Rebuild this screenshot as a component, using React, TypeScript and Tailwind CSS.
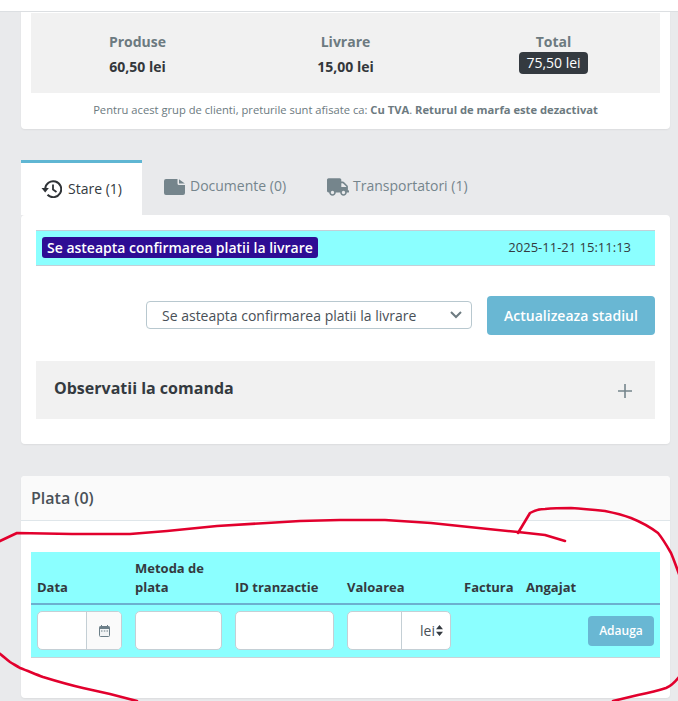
import { FaTruck } from "react-icons/fa";

function Stat({ label, value, badge }: { label: string; value: string; badge?: boolean }) {
  return (
    <div className="flex flex-col items-center w-[208px]">
      <div className="text-[14px] leading-[20px] font-bold text-[#6c7a80] mt-[19px]">{label}</div>
      {badge ? (
        <div className="h-[22px] px-[7.5px] rounded-[4px] bg-[#343a40] text-white text-[14px] leading-[22px]">{value}</div>
      ) : (
        <div className="text-[14px] leading-[20px] font-bold text-[#33373b] mt-[5px]">{value}</div>
      )}
    </div>
  );
}

function Th({ children }: { children: React.ReactNode }) {
  return <div className="text-[13px] leading-[19px] font-bold text-[#343a40] self-end">{children}</div>;
}

export default function App() {
  return (
    <div className="relative h-[701px] w-[678px] overflow-hidden bg-[#e9eaec] font-['Open_Sans',sans-serif] text-[#343a40]">
      <div className="h-[12px] bg-white border-b border-[#dcdfe2]" />
      <div className="px-[21px] pr-[8px]">
        <section className="h-[117px] bg-white rounded-b-[4px] shadow-[0_1px_2px_rgba(0,0,0,0.06)] px-[10px] pt-[1px]">
          <div className="h-[80px] bg-[#f1f1f1] flex justify-center">
            <Stat label="Produse" value="60,50 lei" />
            <Stat label="Livrare" value="15,00 lei" />
            <Stat label="Total" value="75,50 lei" badge />
          </div>
          <p className="mt-[9px] text-center text-[11.2px] leading-[16px] text-[#6c7a80]">
            Pentru acest grup de clienti, preturile sunt afisate ca: <b className="font-bold">Cu TVA</b>. <b className="font-bold">Returul de marfa este dezactivat</b>
          </p>
        </section>

        <nav className="mt-[31px] h-[55px] flex items-start">
          <div className="w-[121px] h-[55px] bg-white border-t-[3px] border-[#5fb6d3] flex items-center justify-center gap-[6px] text-[14px] text-[#343a40] pb-[1px]">
            <svg width="21" height="18" viewBox="0 0 21 18" fill="none" stroke="#2f3337" strokeWidth="2" className="mt-[1px]">
              <path d="M4.2 9A8 8 0 1 1 6.5 14.8" />
              <path d="M0.5 8h7.4L4.2 12.6z" fill="#2f3337" stroke="none" />
              <path d="M12 4.5V9.5L15.5 12" strokeWidth="1.8" />
            </svg>
            <span>Stare (1)</span>
          </div>
          <div className="ml-[22px] mt-[15px] flex items-center gap-[5px] text-[14px] leading-[22px] text-[#75858c]">
            <svg width="21" height="16" viewBox="0 0 21 16" fill="#75858c" className="mt-[2px]">
              <path d="M2 0H13.5V4.5a1.5 1.5 0 0 0 1.5 1.5H21V14a2 2 0 0 1-2 2H2a2 2 0 0 1-2-2V2a2 2 0 0 1 2-2z" />
              <path d="M15 0.2L20.8 4.6H15z" />
            </svg>
            <span>Documente (0)</span>
          </div>
          <div className="ml-[41px] mt-[15px] flex items-center gap-[4px] text-[14px] leading-[22px] text-[#75858c]">
            <FaTruck className="w-[22px] h-[18px] mt-[1px]" />
            <span>Transportatori (1)</span>
          </div>
        </nav>

        <section className="h-[229px] bg-white rounded-[4px] shadow-[0_1px_2px_rgba(0,0,0,0.06)] px-[15px] pt-[15px]">
          <div className="h-[36px] bg-[#8bffff] border-y border-[#c3d0d8] flex items-center justify-between pl-[6px] pr-[24px]">
            <span className="h-[21px] px-[5px] rounded-[3px] bg-[#2e0d94] text-white text-[14px] leading-[21px] font-semibold -mt-[1px]">Se asteapta confirmarea platii la livrare</span>
            <span className="text-[13px] text-[#343a40]">2025-11-21 15:11:13</span>
          </div>
          <div className="mt-[30px] flex justify-end items-start gap-[15px]">
            <div className="mt-[5px] w-[326px] h-[28px] border border-[#b8c8cf] rounded-[4px] bg-white flex items-center justify-between pl-[15px] pr-[9px] text-[14px] text-[#495057]">
              <span>Se asteapta confirmarea platii la livrare</span>
              <svg width="12" height="8" viewBox="0 0 12 8" fill="none" stroke="#6e7b81" strokeWidth="2"><path d="M1 1l5 5 5-5" /></svg>
            </div>
            <button className="w-[168px] h-[39px] rounded-[4px] bg-[#69b7d3] text-white text-[14px] font-semibold">Actualizeaza stadiul</button>
          </div>
          <div className="mt-[26px] h-[58px] bg-[#f1f1f1] flex items-center justify-between pl-[18px] pr-[22px]">
            <h3 className="text-[16px] leading-[24px] font-bold text-[#343a40] -mt-[5px]">Observatii la comanda</h3>
            <svg width="16" height="16" viewBox="0 0 16 16" stroke="#75858c" strokeWidth="1.6" className="mt-[2px]"><path d="M8 1v14M1 8h14" /></svg>
          </div>
        </section>

        <section className="mt-[32px] h-[222px] bg-white rounded-[4px] shadow-[0_1px_2px_rgba(0,0,0,0.06)]">
          <div className="h-[45px] bg-[#fafafa] border-b border-[#dfe6ea] rounded-t-[4px] pl-[10px] text-[16px] leading-[44px] font-semibold text-[#495057]">Plata (0)</div>
          <div className="mx-[10px] mt-[31px] h-[106px] bg-[#8bffff] border-b border-[#c9d3d8]">
            <div className="h-[53px] grid grid-cols-[98px_100px_112px_117px_62px_1fr] pl-[6px] border-b-[2px] border-[#6cb0cf] pb-[6px]">
              <Th>Data</Th>
              <Th>Metoda de plata</Th>
              <Th>ID tranzactie</Th>
              <Th>Valoarea</Th>
              <Th>Factura</Th>
              <Th>Angajat</Th>
            </div>
            <div className="mt-[6px] pl-[6px] pr-[6px] flex items-start">
              <div className="w-[85px] h-[39px] flex border border-[#c4cfd5] rounded-[5px] overflow-hidden bg-white">
                <div className="w-[49px] border-r border-[#c4cfd5]" />
                <div className="flex-1 bg-[#fafafa] flex items-center justify-center">
                  <svg width="11" height="12" viewBox="0 0 11 12" className="mt-[1px]">
                    <path d="M1.5 1.5h8a1 1 0 0 1 1 1v8a1 1 0 0 1-1 1h-8a1 1 0 0 1-1-1v-8a1 1 0 0 1 1-1z" fill="#f2f4f5" stroke="#6c7f88" />
                    <path d="M0.5 1.5h10V4h-10z" fill="#6c7f88" />
                    <path d="M2.5 0v2M8.5 0v2" stroke="#6c7f88" />
                    <path d="M2 6h1.5M4.8 6h1.5M7.5 6H9" stroke="#6c7f88" strokeWidth="1.2" />
                  </svg>
                </div>
              </div>
              <div className="ml-[13px] w-[87px] h-[39px] border border-[#c4cfd5] rounded-[5px] bg-white" />
              <div className="ml-[13px] w-[99px] h-[39px] border border-[#c4cfd5] rounded-[5px] bg-white" />
              <div className="ml-[13px] w-[104px] h-[39px] flex border border-[#c4cfd5] rounded-[5px] bg-white">
                <div className="w-[54px] border-r border-[#c4cfd5]" />
                <div className="flex-1 flex items-center justify-end gap-[1px] pr-[7px] text-[14px] text-[#495057]">
                  lei
                  <svg width="7" height="11" viewBox="0 0 7 11" fill="#343a40"><path d="M3.5 0l3.5 4.2H0zM3.5 11L0 6.8h7z" /></svg>
                </div>
              </div>
              <button className="ml-auto mt-[5px] w-[66px] h-[30px] rounded-[4px] bg-[#69b7d3] text-white text-[12px] font-semibold">Adauga</button>
            </div>
          </div>
        </section>
      </div>

      <svg className="absolute inset-0 pointer-events-none" width="678" height="701" viewBox="0 0 678 701" fill="none" stroke="#e2002d" strokeWidth="2.6" strokeLinejoin="round" strokeLinecap="round">
        <path d="M-1 541.5 L17 533 L72 534 L130 534 L167 531 L217 526 L267 523 L300 521 L340 520 L385 520 L431 523 L488 529 L518 532 L545 535 L565 541" />
        <path d="M518 533 L530 513 C535 510 540 509 545 509 C555 508 562 508 571 508 C585 509 595 510 605 511 C615 513 623 515 631 518 C641 522 650 527 658 533 C663 539 667 546 671 553 C674 560 676 566 679 574" />
        <path d="M679 677 C675 682 671 686 666 688 C657 691 648 693 638 695 L613 701" />
        <path d="M-1 653 C3 656 6 659 10 662 C13 664 17 666 20 668 C28 671 35 674 43 677 C56 681 70 685 83 688 C92 690 101 692 110 694 L137 701" />
      </svg>
    </div>
  );
}
